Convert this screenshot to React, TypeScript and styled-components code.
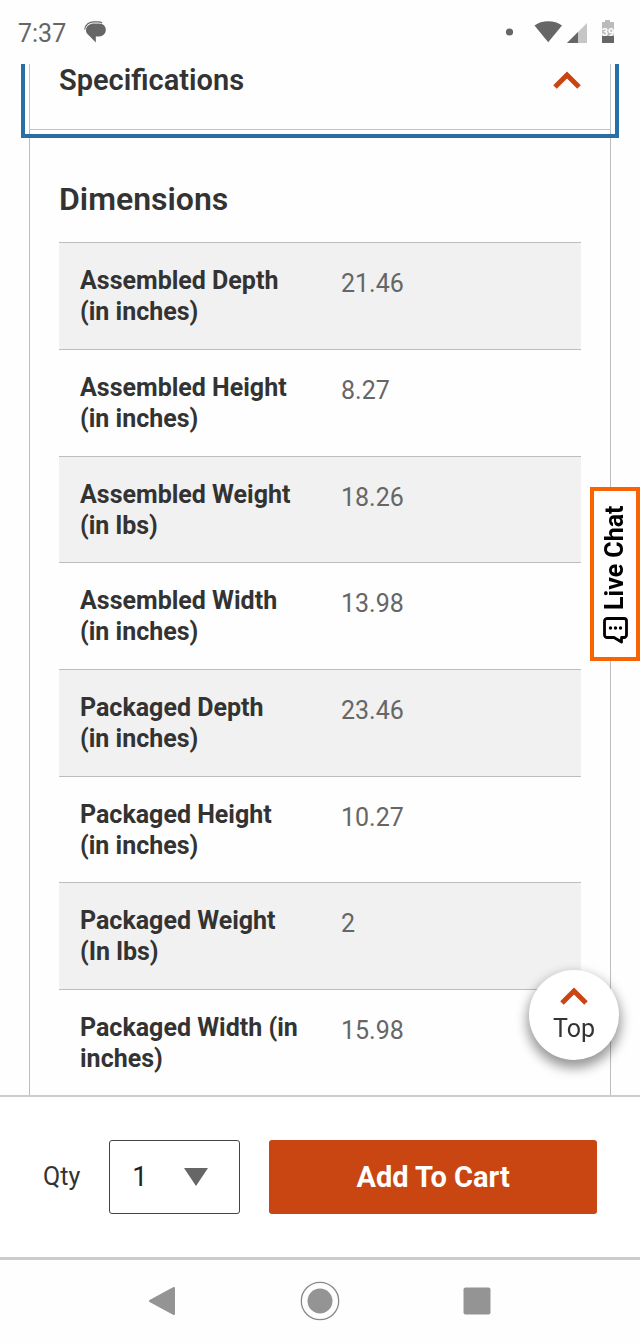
import React from "react";
import styled, { createGlobalStyle } from "styled-components";

const GlobalStyle = createGlobalStyle`
  *, *::before, *::after { box-sizing: border-box; }
  body {
    margin: 0;
    background: #fefefe;
    color: #333;
    font-family: Roboto, "Liberation Sans", sans-serif;
  }
  button, select { font-family: inherit; }
`;

const Shell = styled.div`
  min-height: 100vh;
  display: flex;
  flex-direction: column;
`;

const StatusBar = styled.header`
  height: 64px;
  padding: 0 25px 0 18px;
  display: flex;
  align-items: center;
  color: #666;
`;

const Clock = styled.time`
  padding-top: 4px;
  margin-right: 18px;
  font-size: 25px;
  line-height: 32px;
`;

const StatusIcons = styled.div`
  margin-left: auto;
  display: flex;
  align-items: center;
`;

const Main = styled.main`
  flex: 1;
  overflow: hidden;
`;

const Accordion = styled.section`
  margin: 0 29px;
`;

const AccordionHeader = styled.h2`
  margin: 0;
`;

const AccordionToggle = styled.button`
  width: 100%;
  height: 66px;
  padding: 0 29px 34px;
  display: flex;
  align-items: center;
  justify-content: space-between;
  background: transparent;
  border: 1px solid #bfc4c8;
  border-top: 0;
  outline: 4px solid #286fa8;
  outline-offset: 4px;
  color: #333;
  font-size: 29px;
  font-weight: 600;
  line-height: 32px;
  cursor: pointer;
`;

const AccordionPanel = styled.div`
  padding: 49px 29px 0;
  border: 1px solid #bdbdbd;
  border-width: 0 1px;
`;

const PanelTitle = styled.h3`
  margin: 0 0 23px;
  font-size: 32px;
  font-weight: 600;
  line-height: 40px;
`;

const SpecTable = styled.table`
  width: 100%;
  table-layout: fixed;
  border-spacing: 0;
`;

const SpecRow = styled.tr`
  height: 107px;
  &:nth-child(3n), &:last-child { height: 106px; }
  &:nth-child(odd) { background: #f1f1f1; }
  & > * {
    padding: 22px 18px 0 21px;
    border-top: 1px solid #bdbdbd;
    text-align: left;
    vertical-align: top;
    font-size: 25px;
  }
`;

const SpecName = styled.th`
  width: 50%;
  font-weight: 700;
  line-height: 31px;
`;

const SpecValue = styled.td`
  color: #666;
  line-height: 38px;
`;

const BottomArea = styled.footer`
  position: sticky;
  bottom: 0;
`;

const CartBar = styled.form`
  padding: 43px;
  display: flex;
  align-items: center;
  gap: 29px;
  background: #fff;
  border-top: 2px solid #ccc;
  border-bottom: 3px solid #ccc;
`;

const QtyLabel = styled.label`
  font-size: 25px;
  line-height: 32px;
`;

const SelectWrap = styled.div`
  position: relative;
  width: 131px;
`;

const QtySelect = styled.select`
  display: block;
  width: 100%;
  height: 74px;
  padding: 0 22px;
  appearance: none;
  background: #fff;
  border: 1px solid #444;
  border-radius: 3px;
  color: #222;
  font-size: 27px;
`;

const SelectArrow = styled.svg`
  position: absolute;
  right: 32px;
  top: 28px;
  pointer-events: none;
`;

const AddButton = styled.button`
  flex: 1;
  height: 74px;
  background: #c94612;
  border: 0;
  border-radius: 3px;
  color: #fff;
  font-size: 29px;
  font-weight: 700;
  cursor: pointer;
`;

const SystemNav = styled.nav`
  height: 84px;
  padding: 0 26px 2px;
  display: grid;
  grid-template-columns: 1fr 40px 1fr;
  align-items: center;
  justify-items: center;
  background: #fefefe;
`;

const NavButton = styled.button`
  width: 40px;
  height: 40px;
  padding: 0;
  background: transparent;
  border: 0;
  cursor: pointer;
`;

const ChatTab = styled.button`
  position: fixed;
  right: 0;
  top: 487px;
  width: 50px;
  height: 174px;
  padding: 0 0 2px;
  display: flex;
  align-items: center;
  justify-content: center;
  gap: 6px;
  background: #fff;
  border: 4px solid #f96302;
  color: #000;
  font-size: 25px;
  font-weight: 700;
  line-height: 28px;
  writing-mode: vertical-rl;
  transform: rotate(180deg);
  cursor: pointer;
`;

const TopButton = styled.button`
  position: fixed;
  right: 21px;
  bottom: 284px;
  width: 90px;
  height: 90px;
  padding: 2px 0 0;
  display: flex;
  flex-direction: column;
  align-items: center;
  justify-content: center;
  gap: 8px;
  background: #fff;
  border: 0;
  border-radius: 50%;
  box-shadow: 0 6px 12px 2px rgba(0, 0, 0, 0.4);
  color: #333;
  font-size: 25px;
  line-height: 32px;
  cursor: pointer;
`;

const Chevron = () => (
  <svg width="28" height="18" viewBox="0 0 28 18" fill="none" stroke="#c94612" strokeWidth="5" aria-hidden="true">
    <path d="M2 16 14 4l12 12" />
  </svg>
);

const specs = [
  ["Assembled Depth (in\u00a0inches)", "21.46"],
  ["Assembled Height (in\u00a0inches)", "8.27"],
  ["Assembled Weight (in\u00a0lbs)", "18.26"],
  ["Assembled Width (in\u00a0inches)", "13.98"],
  ["Packaged Depth (in\u00a0inches)", "23.46"],
  ["Packaged Height (in\u00a0inches)", "10.27"],
  ["Packaged Weight (In\u00a0lbs)", "2"],
  ["Packaged Width (in inches)", "15.98"],
];

export default function App() {
  return (
    <Shell>
      <GlobalStyle />
      <StatusBar>
        <Clock>7:37</Clock>
        <svg width="22" height="22" viewBox="0 0 22 22" fill="#666" aria-hidden="true">
          <path d="M10 2.600h5c4 0 6.800 2.800 6.800 6.200 0 3.800-2.800 6.700-6.800 6.700h-3.200V21.500L5 14.600C3 13 1.800 11 2 9 2.200 5 6 2.600 10 2.600Z" />
          <path d="M.8 8.500C1 3.500 5.500.8 10 .8h4c1.500 0 3 .4 4.200 1.200" fill="none" stroke="#666" strokeWidth="1.200" />
        </svg>
        <StatusIcons>
          <svg width="110" height="26" viewBox="0 0 110 26" role="img" aria-label="Wi-Fi, signal, battery 39%">
            <circle cx="4.500" cy="13" r="3.600" fill="#666" />
            <path d="M29.500 6.500C36.500 .8 50 .8 57 6.500L43.200 23.200Z" fill="#666" />
            <path d="M82 4v20H62Z" fill="#c6c6c6" />
            <path d="M73 13v11H62Z" fill="#666" />
            <path d="M100 1h5v2h4v21H97V3h3Z" fill="#bbb" />
            <path d="M97 17h12v7H97Z" fill="#666" />
            <text x="103" y="17" textAnchor="middle" fontSize="11" fontWeight="700" fill="#fff">39</text>
          </svg>
        </StatusIcons>
      </StatusBar>
      <Main>
        <Accordion>
          <AccordionHeader>
            <AccordionToggle type="button" aria-expanded="true" aria-controls="spec-panel">
              Specifications
              <Chevron />
            </AccordionToggle>
          </AccordionHeader>
          <AccordionPanel id="spec-panel">
            <PanelTitle>Dimensions</PanelTitle>
            <SpecTable>
              <tbody>
                {specs.map(([name, value]) => (
                  <SpecRow key={name}>
                    <SpecName scope="row">{name}</SpecName>
                    <SpecValue>{value}</SpecValue>
                  </SpecRow>
                ))}
              </tbody>
            </SpecTable>
          </AccordionPanel>
        </Accordion>
      </Main>
      <ChatTab type="button">
        <svg width="28" height="28" viewBox="0 0 28 28" aria-hidden="true">
          <g transform="rotate(180 14 14)">
            <path d="M6 2.500h17a2.500 2.500 0 0 1 2.500 2.500v14a2.500 2.500 0 0 1-2.500 2.500h-2.500v4.500l-7.500-4.500H6a2.500 2.500 0 0 1-2.500-2.500V5A2.500 2.500 0 0 1 6 2.500Z" fill="none" stroke="#000" strokeWidth="2.800" strokeLinejoin="round" />
            <circle cx="9.500" cy="12" r="1.700" />
            <circle cx="14.500" cy="12" r="1.700" />
            <circle cx="19.500" cy="12" r="1.700" />
          </g>
        </svg>
        Live Chat
      </ChatTab>
      <TopButton type="button">
        <Chevron />
        Top
      </TopButton>
      <BottomArea>
        <CartBar>
          <QtyLabel htmlFor="qty">Qty</QtyLabel>
          <SelectWrap>
            <QtySelect id="qty" defaultValue="1">
              <option>1</option>
              <option>2</option>
              <option>3</option>
            </QtySelect>
            <SelectArrow width="24" height="18" viewBox="0 0 24 18" aria-hidden="true">
              <path d="M0 0h24L12 18Z" fill="#666" />
            </SelectArrow>
          </SelectWrap>
          <AddButton type="button">Add To Cart</AddButton>
        </CartBar>
        <SystemNav aria-label="System">
          <NavButton type="button" aria-label="Back">
            <svg width="40" height="40" viewBox="0 0 40 40">
              <path d="M7 20 31 7v26Z" fill="#949494" stroke="#949494" strokeWidth="2" strokeLinejoin="round" />
            </svg>
          </NavButton>
          <NavButton type="button" aria-label="Home">
            <svg width="40" height="40" viewBox="0 0 40 40">
              <circle cx="20" cy="20" r="18.700" fill="none" stroke="#888" strokeWidth="1.300" />
              <circle cx="20" cy="20" r="12.500" fill="#949494" />
            </svg>
          </NavButton>
          <NavButton type="button" aria-label="Recents">
            <svg width="40" height="40" viewBox="0 0 40 40">
              <rect x="6.500" y="6.500" width="27" height="27" rx="2" fill="#949494" />
            </svg>
          </NavButton>
        </SystemNav>
      </BottomArea>
    </Shell>
  );
}
